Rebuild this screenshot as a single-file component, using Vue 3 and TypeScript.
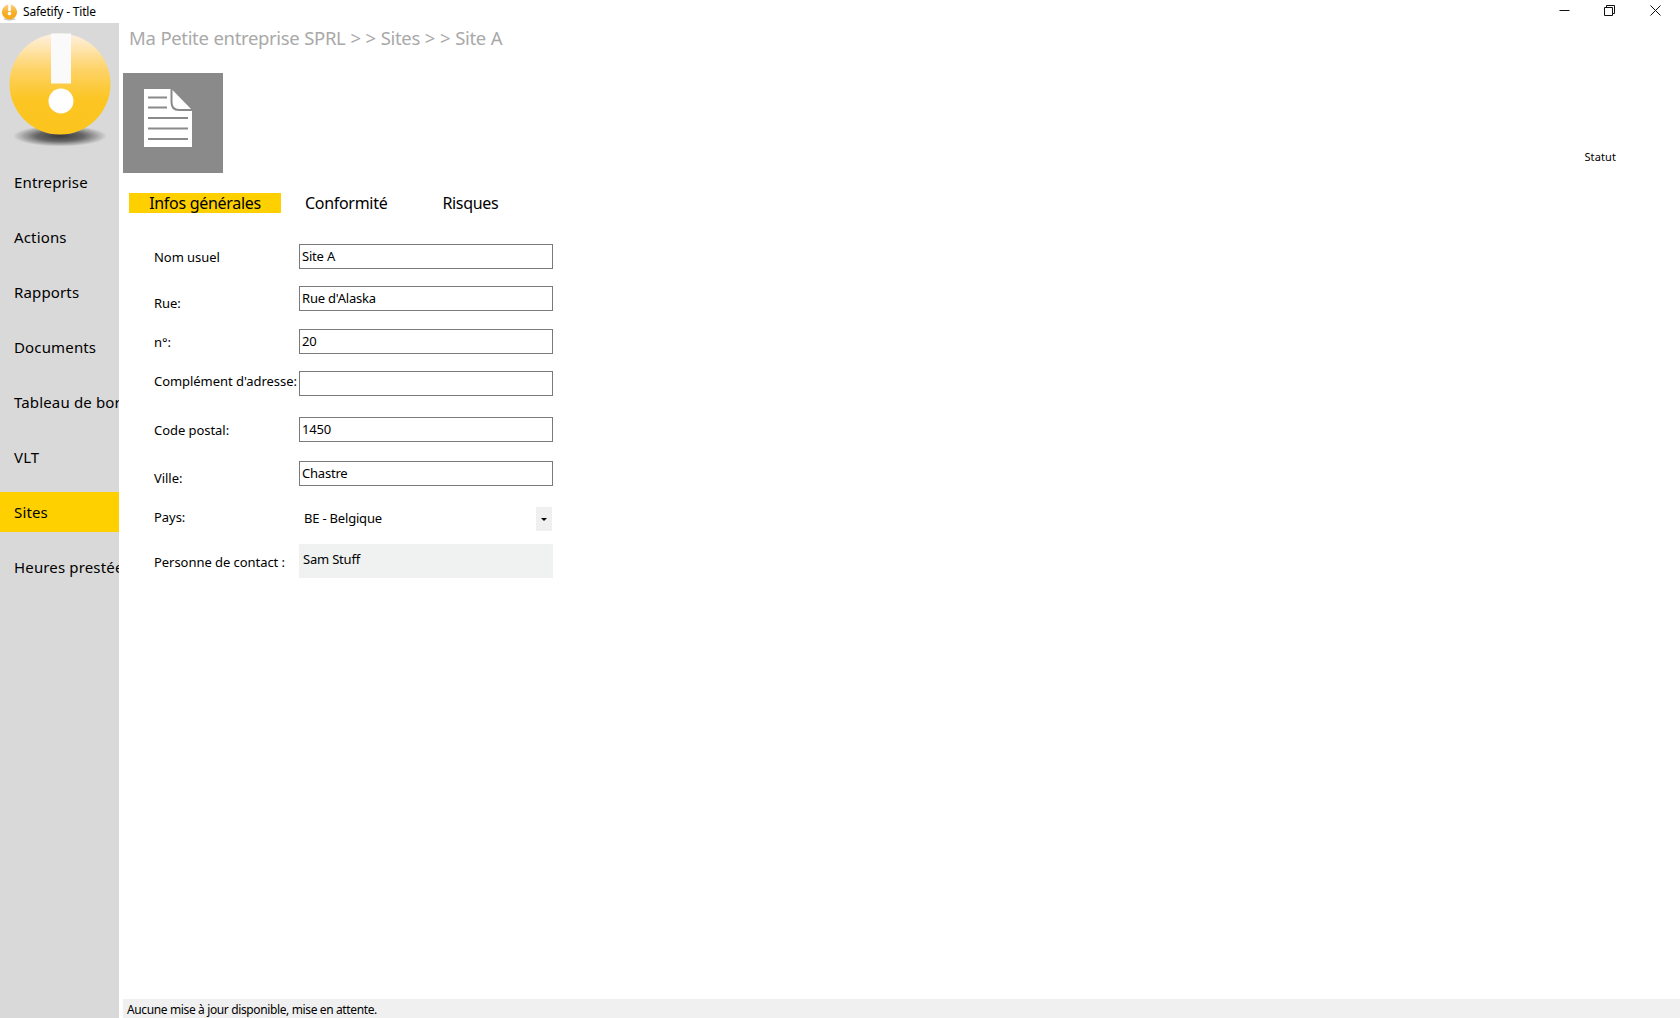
<script setup lang="ts">
const navItems: string[] = ['Entreprise', 'Actions', 'Rapports', 'Documents', 'Tableau de bord', 'VLT', 'Sites', 'Heures prestées']
const tabs: string[] = ['Infos générales', 'Conformité', 'Risques']
</script>

<template>
  <div class="window">
    <header class="titlebar">
      <svg class="app-icon" width="18" height="18" viewBox="0 0 18 18">
        <defs>
          <linearGradient id="tg" x1="0" y1="0" x2="0" y2="1">
            <stop offset="0" stop-color="#fbd28a" />
            <stop offset="0.55" stop-color="#f6ae24" />
            <stop offset="1" stop-color="#f5a81c" />
          </linearGradient>
        </defs>
        <ellipse cx="9.5" cy="16.3" rx="6" ry="1.1" fill="#c9c9c9" />
        <circle cx="9.5" cy="9" r="7.6" fill="url(#tg)" />
        <rect x="8.2" y="1.5" width="2.6" height="6.5" fill="#fff" />
        <circle cx="9.5" cy="10.6" r="1.8" fill="#fff" />
      </svg>
      <span class="app-title">Safetify - Title</span>
      <div class="win-btns">
        <svg width="11" height="11" viewBox="0 0 11 11"><path d="M0.5 5.5H10.5" stroke="#111" fill="none" /></svg>
        <svg width="11" height="11" viewBox="0 0 11 11"><path d="M0.5 2.5H8.5V10.5H0.5ZM2.5 2.5V0.5H10.5V8.5H8.5" stroke="#111" fill="none" /></svg>
        <svg width="11" height="11" viewBox="0 0 11 11"><path d="M0.5 0.5L10.5 10.5M10.5 0.5L0.5 10.5" stroke="#111" fill="none" /></svg>
      </div>
    </header>

    <div class="body">
      <aside class="sidebar">
        <svg class="logo" width="119" height="131" viewBox="0 0 119 131">
          <defs>
            <linearGradient id="sphere" x1="0" y1="0" x2="0" y2="1">
              <stop offset="0" stop-color="#fff1e4" />
              <stop offset="0.12" stop-color="#ffe7b8" />
              <stop offset="0.35" stop-color="#fed368" />
              <stop offset="0.65" stop-color="#fcc523" />
              <stop offset="1" stop-color="#fcc41c" />
            </linearGradient>
            <radialGradient id="shadow">
              <stop offset="0" stop-color="#3a3a3a" />
              <stop offset="0.5" stop-color="#666" />
              <stop offset="1" stop-color="#d9d9d9" />
            </radialGradient>
          </defs>
          <ellipse cx="60" cy="113" rx="47" ry="10.5" fill="url(#shadow)" />
          <circle cx="60" cy="61" r="50.5" fill="url(#sphere)" />
          <rect x="51" y="10.5" width="20" height="50" fill="#fafafa" />
          <circle cx="61" cy="78" r="12.5" fill="#fff" />
        </svg>
        <nav class="nav">
          <div v-for="item in navItems" :key="item" class="nav-item" :class="{ active: item === 'Sites' }">
            <span>{{ item }}</span>
          </div>
        </nav>
      </aside>

      <main class="main">
        <h1 class="crumb">Ma Petite entreprise SPRL &gt; &gt; Sites &gt; &gt; Site A</h1>
        <div class="head-row">
          <div class="doc-tile">
            <svg width="100" height="100" viewBox="0 0 100 100">
              <path d="M21 16H48.5L69 37V74H21Z" fill="#fff" />
              <path d="M48.5 16V29Q48.5 37 56 37H69" fill="none" stroke="#8a8a8a" stroke-width="2" />
              <path d="M25 24.5H44M25 34.5H44M25 45H65M25 55.5H65M25 66H65" stroke="#8a8a8a" stroke-width="2" fill="none" />
            </svg>
          </div>
          <div class="statut">Statut</div>
        </div>

        <div class="tabs">
          <div v-for="(tab, i) in tabs" :key="tab" class="tab" :class="['tab-' + i, { selected: i === 0 }]">{{ tab }}</div>
        </div>

        <form class="form" @submit.prevent>
          <label class="lbl l-nom">Nom usuel</label>
          <div class="field">Site A</div>
          <label class="lbl l-rue">Rue:</label>
          <div class="field">Rue d'Alaska</div>
          <label class="lbl l-num">n°:</label>
          <div class="field">20</div>
          <label class="lbl l-comp">Complément d'adresse:</label>
          <div class="field"></div>
          <label class="lbl l-code">Code postal:</label>
          <div class="field">1450</div>
          <label class="lbl l-ville">Ville:</label>
          <div class="field">Chastre</div>
          <label class="lbl l-pays">Pays:</label>
          <div class="select">
            <span class="select-text">BE - Belgique</span>
            <span class="select-btn"><i class="caret"></i></span>
          </div>
          <label class="lbl l-pers">Personne de contact :</label>
          <div class="readonly">Sam Stuff</div>
        </form>

        <footer class="status">Aucune mise à jour disponible, mise en attente.</footer>
      </main>
    </div>
  </div>
</template>

<style>
html, body { margin: 0; padding: 0; background: #fff; }
</style>

<style scoped>
.window {
  width: 1680px;
  height: 1018px;
  display: flex;
  flex-direction: column;
  overflow: hidden;
  background: #fff;
  color: #000;
  font-family: "Noto Sans", "Open Sans", sans-serif;
}
.titlebar {
  height: 23px;
  flex: none;
  display: flex;
  align-items: center;
}
.app-icon { margin-left: 0; }
.app-title { font-size: 12px; margin-left: 5px; letter-spacing: -0.2px; }
.win-btns {
  margin-left: auto;
  margin-right: 19px;
  display: flex;
  gap: 34px;
  align-items: center;
  align-self: flex-start;
  height: 20px;
}
.win-btns svg:last-child { margin-left: 1px; }
.body { flex: 1; display: flex; min-height: 0; }
.sidebar {
  width: 119px;
  flex: none;
  background: #d9d9d9;
  overflow: hidden;
}
.logo { display: block; }
.nav { margin-top: 8px; }
.nav-item {
  box-sizing: border-box;
  height: 40px;
  margin-bottom: 15px;
  display: flex;
  align-items: center;
  padding: 0 0 1px 14px;
  font-size: 15px;
  letter-spacing: 0.15px;
  white-space: nowrap;
  overflow: hidden;
}
.nav-item.active { background: #ffd000; }
.main {
  flex: 1;
  min-width: 0;
  display: flex;
  flex-direction: column;
  padding-left: 4px;
}
.crumb {
  margin: 1px 0 1px 6px;
  font-size: 18.5px;
  line-height: 28px;
  font-weight: 400;
  color: #a9a9a9;
  letter-spacing: -0.35px;
  word-spacing: 0.5px;
}
.head-row {
  display: flex;
  margin-top: 20px;
  height: 100px;
}
.doc-tile { width: 100px; height: 100px; background: #8a8a8a; }
.doc-tile svg { display: block; }
.statut {
  margin-left: auto;
  margin-right: 64px;
  align-self: flex-end;
  padding-bottom: 9px;
  font-size: 11px;
  letter-spacing: 0.1px;
}
.tabs {
  display: flex;
  margin: 20px 0 0 6px;
  height: 20px;
  font-size: 16px;
  line-height: 20px;
  letter-spacing: -0.3px;
}
.tab { text-align: center; }
.tab-0 { width: 152px; }
.tab-1 { margin-left: 24px; }
.tab-2 { margin-left: 55px; }
.tab.selected { background: #ffd000; }
.form {
  display: grid;
  grid-template-columns: 145px 254px;
  grid-template-rows: 42px 43px 42px 46px 44px 46px 37px 34px;
  align-items: start;
  align-content: start;
  margin: 31px 0 0 31px;
  font-size: 13px;
  letter-spacing: -0.2px;
  flex: 1;
}
.lbl { line-height: 18px; white-space: nowrap; letter-spacing: -0.05px; }
.l-nom { margin-top: 4px; }
.l-rue { margin-top: 8px; }
.l-num { margin-top: 4px; }
.l-comp { margin-top: 1px; }
.l-code { margin-top: 4px; }
.l-ville { margin-top: 8px; }
.l-pays { margin-top: 1px; }
.l-pers { margin-top: 9px; }
.field {
  box-sizing: border-box;
  height: 25px;
  border: 1px solid #7a7a7a;
  padding: 0 2px;
  line-height: 22px;
  background: #fff;
}
.select {
  height: 24px;
  display: flex;
  align-items: center;
  justify-content: space-between;
  padding: 0 1px 0 5px;
}
.select-text { margin-bottom: 3px; }
.select-btn {
  width: 16px;
  height: 24px;
  background: #f0f0f0;
  display: flex;
  align-items: center;
  justify-content: center;
}
.caret {
  width: 0;
  height: 0;
  border-left: 3px solid transparent;
  border-right: 3px solid transparent;
  border-top: 3px solid #000;
}
.readonly {
  box-sizing: border-box;
  height: 34px;
  background: #f0f1f1;
  padding: 6px 4px 0;
  line-height: 18px;
}
.status {
  height: 19px;
  flex: none;
  background: #f0f0f0;
  font-size: 12px;
  line-height: 21px;
  padding-left: 4px;
  letter-spacing: -0.37px;
}
</style>
